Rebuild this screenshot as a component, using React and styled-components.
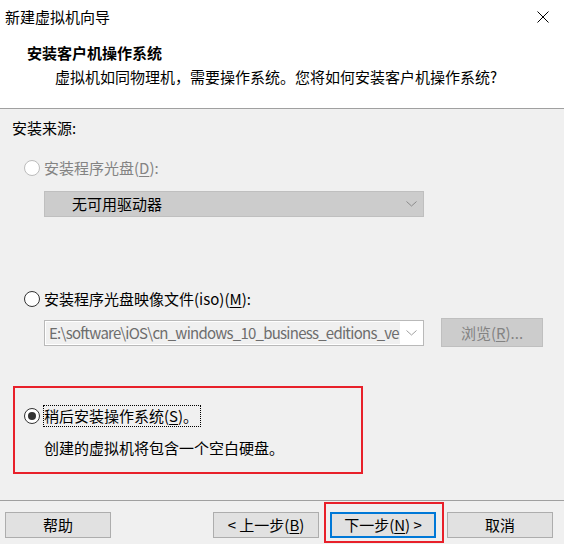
import React from 'react';
import styled, { createGlobalStyle } from 'styled-components';

const Global = createGlobalStyle`
  html, body { margin: 0; padding: 0; background: #f0f0f0; }
  body {
    font-family: "Noto Sans CJK SC", "Noto Sans", sans-serif;
    font-size: 15px;
    color: #000;
  }
  * { box-sizing: border-box; }
`;

const Window = styled.div`
  width: 564px;
  height: 544px;
  display: flex;
  flex-direction: column;
  background: #f0f0f0;
  overflow: hidden;
`;

const TitleBar = styled.div`
  height: 33px;
  background: #fff;
  display: flex;
  align-items: center;
  justify-content: space-between;
  padding: 0 15px 0 5px;
  font-size: 15px;
  line-height: 20px;
`;

const Header = styled.div`
  height: 76px;
  background: #fff;
  border-bottom: 1px solid #a0a0a0;
  padding: 10px 0 0 27px;
`;

const Heading = styled.div`
  font-weight: bold;
  line-height: 20px;
`;

const Subtitle = styled.div`
  margin-top: 4px;
  padding-left: 28px;
  line-height: 20px;
`;

const Body = styled.div`
  height: 391px;
  display: flex;
  flex-direction: column;
  align-items: flex-start;
`;

const SourceLabel = styled.div`
  margin: 9px 0 0 12px;
  line-height: 20px;
`;

const RadioRow = styled.div`
  display: flex;
  align-items: center;
  gap: 4px;
  margin-top: ${p => p.$top || 0}px;
  padding-left: ${p => p.$left || 0}px;
  line-height: 20px;
  color: ${p => (p.$disabled ? '#838383' : '#000')};
`;

const Circle = styled.span`
  width: 16px;
  height: 16px;
  border-radius: 50%;
  border: 1px solid ${p => (p.$disabled ? '#bcbcbc' : '#333')};
  background: #fff;
  display: flex;
  align-items: center;
  justify-content: center;
  flex: none;
  &::after {
    content: '';
    width: 8px;
    height: 8px;
    border-radius: 50%;
    background: #333;
    display: ${p => (p.$checked ? 'block' : 'none')};
  }
`;

const Key = styled.span`
  text-decoration: underline;
  text-underline-offset: 2px;
`;

const FocusLabel = styled.span`
  outline: 1px dotted #000;
  outline-offset: 0;
  padding: 0 2px 0 0;
`;

const Combo = styled.div`
  width: 380px;
  height: 26px;
  display: flex;
  align-items: center;
  border: 1px solid ${p => (p.$disabled ? '#bfbfbf' : '#b9b9b9')};
  background: ${p => (p.$disabled ? '#cccccc' : '#fff')};
  margin: ${p => p.$margin || 0};
  flex: none;
`;

const ComboText = styled.div`
  flex: 1;
  min-width: 0;
  align-self: stretch;
  margin: ${p => (p.$filled ? '1px 0 1px 1px' : '0')};
  padding-left: ${p => p.$pad}px;
  background: ${p => (p.$filled ? '#f0f0f0' : 'transparent')};
  color: ${p => (p.$filled ? '#6d6d6d' : '#000')};
  line-height: ${p => (p.$filled ? 22 : 24)}px;
  letter-spacing: ${p => (p.$filled ? '-0.75px' : '0')};
  white-space: nowrap;
  overflow: hidden;
`;

const Chevron = styled.span`
  width: 23px;
  flex: none;
  display: flex;
  justify-content: center;
  align-items: center;
`;

const FileRow = styled.div`
  display: flex;
  align-items: center;
  margin-top: 9px;
  padding-left: 44px;
  height: 29px;
`;

const BrowseButton = styled.div`
  margin-left: 17px;
  width: 102px;
  height: 29px;
  border: 1px solid #bfbfbf;
  background: #cccccc;
  color: #838383;
  display: flex;
  align-items: center;
  justify-content: center;
  line-height: 20px;
`;

const HighlightBox = styled.div`
  margin: 39px 0 0 13px;
  width: 350px;
  height: 88px;
  border: 2px solid #e8202a;
  padding: 18px 0 0 9px;
`;

const Description = styled.div`
  margin-top: 12px;
  padding-left: 20px;
  line-height: 20px;
`;

const Footer = styled.div`
  border-top: 1px solid #a0a0a0;
  flex: 1;
  display: flex;
  justify-content: space-between;
  align-items: flex-start;
  padding: 11px 11px 0 5px;
`;

const ButtonGroup = styled.div`
  display: flex;
  gap: 11px;
`;

const Button = styled.div`
  width: 106px;
  height: 26px;
  background: #e1e1e1;
  border: ${p => (p.$default ? '2px solid #0078d7' : '1px solid #adadad')};
  display: flex;
  align-items: center;
  justify-content: center;
  line-height: 20px;
`;

const Marked = styled.div`
  position: relative;
  &::before {
    content: '';
    position: absolute;
    top: -10px;
    left: -6px;
    right: -8px;
    bottom: -5px;
    border: 2px solid #e8202a;
    pointer-events: none;
  }
`;

const ChevronIcon = ({ color }) => (
  <svg width="11" height="6" viewBox="0 0 11 6">
    <polyline points="0.5,0.5 5.5,5 10.5,0.5" fill="none" stroke={color} strokeWidth="1" />
  </svg>
);

export default function App() {
  return (
    <>
      <Global />
      <Window>
        <TitleBar>
          <span>新建虚拟机向导</span>
          <svg width="12" height="12" viewBox="0 0 12 12">
            <line x1="0.5" y1="0.5" x2="11.5" y2="11.5" stroke="#000" strokeWidth="1" />
            <line x1="11.5" y1="0.5" x2="0.5" y2="11.5" stroke="#000" strokeWidth="1" />
          </svg>
        </TitleBar>
        <Header>
          <Heading>安装客户机操作系统</Heading>
          <Subtitle>虚拟机如同物理机，需要操作系统。您将如何安装客户机操作系统?</Subtitle>
        </Header>
        <Body>
          <SourceLabel>安装来源:</SourceLabel>
          <RadioRow $top={20} $left={24} $disabled>
            <Circle $disabled />
            <span>安装程序光盘(<Key>D</Key>):</span>
          </RadioRow>
          <Combo $disabled $margin="13px 0 0 44px">
            <ComboText $pad={27}>无可用驱动器</ComboText>
            <Chevron><ChevronIcon color="#8a8a8a" /></Chevron>
          </Combo>
          <RadioRow $top={72} $left={24}>
            <Circle />
            <span>安装程序光盘映像文件(iso)(<Key>M</Key>):</span>
          </RadioRow>
          <FileRow>
            <Combo>
              <ComboText $filled $pad={3}>E:\software\iOS\cn_windows_10_business_editions_ve</ComboText>
              <Chevron><ChevronIcon color="#a0a0a0" /></Chevron>
            </Combo>
            <BrowseButton>浏览(<Key>R</Key>)...</BrowseButton>
          </FileRow>
          <HighlightBox>
            <RadioRow>
              <Circle $checked />
              <FocusLabel>稍后安装操作系统(<Key>S</Key>)。</FocusLabel>
            </RadioRow>
            <Description>创建的虚拟机将包含一个空白硬盘。</Description>
          </HighlightBox>
        </Body>
        <Footer>
          <Button>帮助</Button>
          <ButtonGroup>
            <Button>&lt; 上一步(<Key>B</Key>)</Button>
            <Marked>
              <Button $default>下一步(<Key>N</Key>) &gt;</Button>
            </Marked>
            <Button>取消</Button>
          </ButtonGroup>
        </Footer>
      </Window>
    </>
  );
}
